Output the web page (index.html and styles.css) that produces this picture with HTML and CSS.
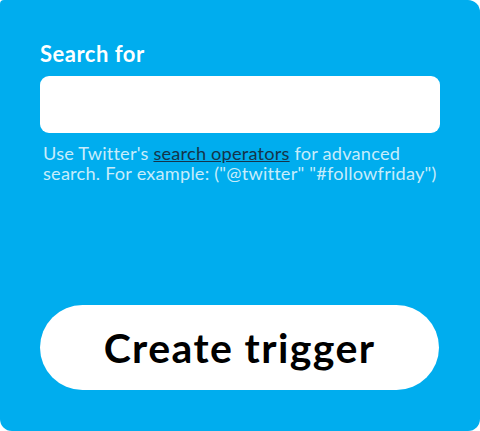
FILE: index.html
```html
<!DOCTYPE html>
<html>
<head>
<meta charset="utf-8">
<link rel="stylesheet" href="styles.css">
</head>
<body>
<div class="panel">
  <div class="field">
    <label class="label">Search for</label>
    <div class="input"></div>
    <p class="help">Use Twitter's <a class="link" href="#">search operators</a> for advanced search. For example: ("@twitter" "#followfriday")</p>
  </div>
  <button class="btn">Create trigger</button>
</div>
</body>
</html>
```
FILE: styles.css
```css
html, body {
  margin: 0;
  padding: 0;
  background: #ffffff;
}
.panel {
  width: 480px;
  height: 431px;
  box-sizing: border-box;
  background: #00adee;
  border-radius: 4px 12px 12px 12px;
  padding: 40px 40px 0 40px;
  display: flex;
  flex-direction: column;
  font-family: Lato, "Noto Sans", sans-serif;
}
.field {
  display: flex;
  flex-direction: column;
}
.label {
  color: #ffffff;
  font-weight: 700;
  font-size: 22px;
  letter-spacing: 0.5px;
  line-height: 28px;
  margin-bottom: 8px;
}
.input {
  height: 57px;
  background: #ffffff;
  border-radius: 9px;
}
.help {
  margin: 10px 0 0 3px;
  color: #c7ecfb;
  font-size: 18.2px;
  letter-spacing: 0.2px;
  line-height: 20px;
}
.link {
  color: #15344a;
  text-decoration: underline;
}
.btn {
  margin-top: auto;
  margin-bottom: 41px;
  height: 85px;
  width: 399px;
  border: none;
  border-radius: 43px;
  background: #ffffff;
  color: #000000;
  font-family: Lato, "Noto Sans", sans-serif;
  font-weight: 700;
  font-size: 41px;
  letter-spacing: 1.4px;
  padding: 0;
}
```
